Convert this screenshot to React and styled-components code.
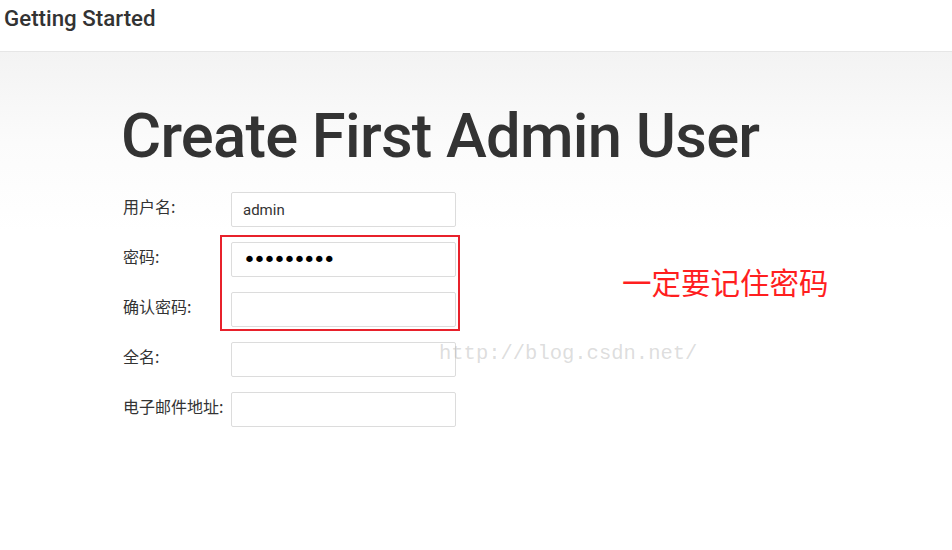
import React from "react";
import styled, { createGlobalStyle } from "styled-components";

const Global = createGlobalStyle`
  html, body { margin: 0; padding: 0; }
  body {
    width: 952px;
    height: 550px;
    overflow: hidden;
    background: #fff;
    font-family: Roboto, "Noto Sans CJK SC", sans-serif;
    color: #333;
  }
`;

const Page = styled.div`
  position: relative;
  width: 952px;
  height: 550px;
  display: flex;
  flex-direction: column;
`;

const Header = styled.header`
  height: 51px;
  flex: none;
  display: flex;
  align-items: flex-start;
  padding-left: 4px;
  background: #fff;
  border-bottom: 1px solid #e6e6e6;
`;

const HeaderTitle = styled.h1`
  margin: 0;
  font-family: Roboto, sans-serif;
  font-weight: 500;
  font-size: 22.3px;
  line-height: 36px;
  color: #333;
`;

const Main = styled.main`
  flex: 1;
  background: linear-gradient(to bottom, #f3f3f3 0px, #fbfbfb 90px, #ffffff 180px);
  padding: 48px 0 0 121px;
`;

const Title = styled.h2`
  margin: 0;
  font-family: Roboto, sans-serif;
  font-weight: 500;
  font-size: 61.5px;
  line-height: 72px;
  letter-spacing: -0.75px;
  color: #333;
`;

const Form = styled.form`
  margin-top: 20px;
  display: flex;
  flex-direction: column;
  gap: 15px;
`;

const Row = styled.div`
  display: flex;
  align-items: flex-start;
`;

const Label = styled.label`
  width: 110px;
  flex: none;
  padding-top: 4px;
  padding-left: 2px;
  box-sizing: border-box;
  font-family: "Noto Sans CJK SC", sans-serif;
  font-size: 16px;
  line-height: 20px;
  color: #333;
  white-space: nowrap;
`;

const Input = styled.input`
  box-sizing: border-box;
  width: 225px;
  height: 35px;
  margin: 0;
  padding: 0 11px;
  border: 1px solid #dcdcdc;
  border-radius: 2px;
  background: #fff;
  font-family: Roboto, sans-serif;
  font-size: 15px;
  color: #333;
  outline: none;

  &[type="password"] {
    font-family: "DejaVu Sans", sans-serif;
    font-size: 22px;
    letter-spacing: -3px;
    color: #000;
  }
`;

const Highlight = styled.div`
  position: absolute;
  left: 220px;
  top: 235px;
  width: 240px;
  height: 96px;
  box-sizing: border-box;
  border: 2px solid #e8212b;
  pointer-events: none;
`;

const Note = styled.div`
  position: absolute;
  left: 622px;
  top: 261px;
  font-family: "Noto Sans CJK SC", sans-serif;
  font-size: 29.5px;
  line-height: 40px;
  color: #ff1f1f;
  white-space: nowrap;
`;

const Watermark = styled.div`
  position: absolute;
  left: 439px;
  top: 341px;
  font-family: "Liberation Mono", monospace;
  font-size: 20.5px;
  line-height: 26px;
  color: rgba(180, 180, 180, 0.45);
  white-space: nowrap;
  pointer-events: none;
`;

const fields = [
  { id: "username", label: "用户名:", type: "text", value: "admin" },
  { id: "password1", label: "密码:", type: "password", value: "123456789" },
  { id: "password2", label: "确认密码:", type: "password", value: "" },
  { id: "fullname", label: "全名:", type: "text", value: "" },
  { id: "email", label: "电子邮件地址:", type: "text", value: "" },
];

export default function App() {
  return (
    <>
      <Global />
      <Page>
        <Header>
          <HeaderTitle>Getting Started</HeaderTitle>
        </Header>
        <Main>
          <Title>Create First Admin User</Title>
          <Form onSubmit={(e) => e.preventDefault()}>
            {fields.map((f) => (
              <Row key={f.id}>
                <Label htmlFor={f.id}>{f.label}</Label>
                <Input id={f.id} name={f.id} type={f.type} defaultValue={f.value} />
              </Row>
            ))}
          </Form>
        </Main>
        <Highlight />
        <Note>一定要记住密码</Note>
        <Watermark>http://blog.csdn.net/</Watermark>
      </Page>
    </>
  );
}
